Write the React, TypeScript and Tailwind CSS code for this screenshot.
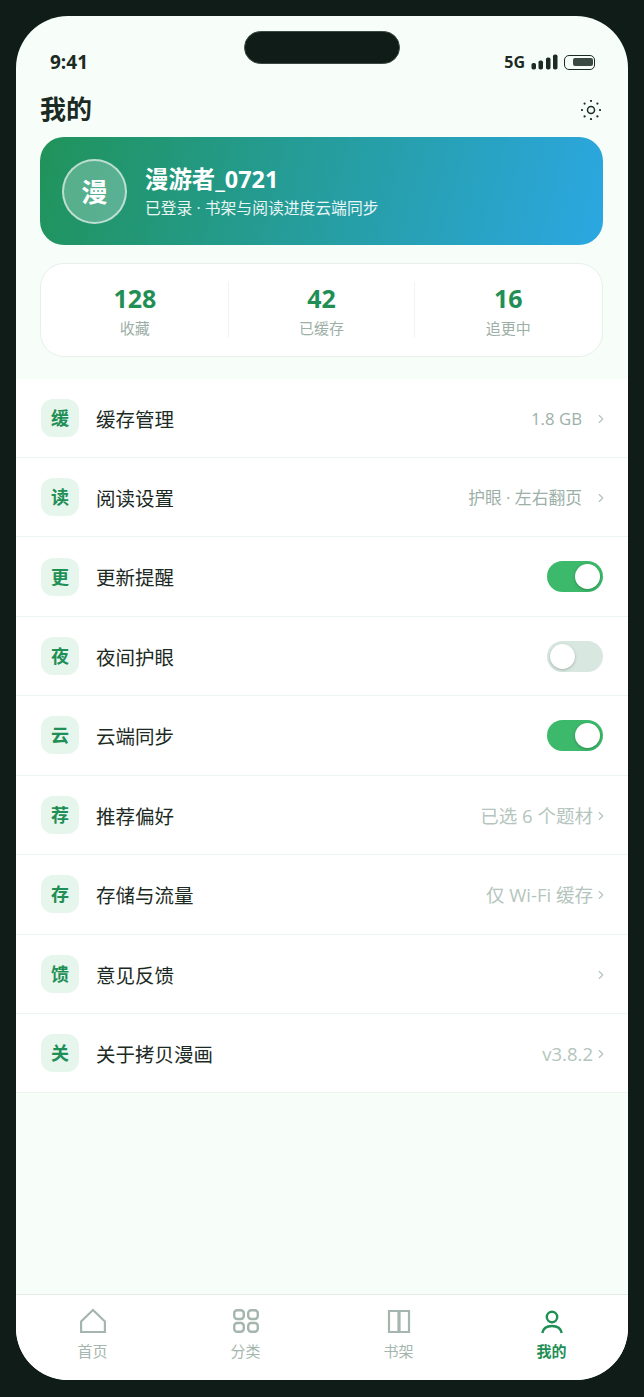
import { ChevronRight } from 'lucide-react';

const FONT = { fontFamily: '"Open Sans", "Noto Sans CJK SC", sans-serif' };

type Row = {
  badge: string;
  label: string;
  value?: string;
  wide?: boolean;
  toggle?: boolean;
};

const ROWS: Row[] = [
  { badge: '缓', label: '缓存管理', value: '1.8 GB', wide: true },
  { badge: '读', label: '阅读设置', value: '护眼 · 左右翻页', wide: true },
  { badge: '更', label: '更新提醒', toggle: true },
  { badge: '夜', label: '夜间护眼', toggle: false },
  { badge: '云', label: '云端同步', toggle: true },
  { badge: '荐', label: '推荐偏好', value: '已选 6 个题材' },
  { badge: '存', label: '存储与流量', value: '仅 Wi-Fi 缓存' },
  { badge: '馈', label: '意见反馈' },
  { badge: '关', label: '关于拷贝漫画', value: 'v3.8.2' },
];

function Toggle({ on }: { on: boolean }) {
  return (
    <div className={`flex h-[31px] w-[56px] items-center rounded-full px-[3px] ${on ? 'justify-end bg-[#3cb96b]' : 'justify-start bg-[#d8e8e0]'}`}>
      <div className="h-[25px] w-[25px] rounded-full bg-white shadow-[0_1px_3px_rgba(0,0,0,0.25)]"></div>
    </div>
  );
}

function SettingRow({ row }: { row: Row }) {
  return (
    <div className="flex h-[79.45px] items-center border-b border-[#edf5f1] pr-[25px] pl-[25px]">
      <div className="flex h-[38px] w-[38px] items-center justify-center rounded-[12px] bg-[#e6f6ed] pt-[1px] text-[18px] font-bold text-[#1f8f55]">
        {row.badge}
      </div>
      <span className="ml-[17px] pt-[3px] text-[19.5px] text-[#1c2a24]">{row.label}</span>
      <div className="ml-auto flex items-center">
        {row.value && (
          <span className={`pt-[1px] ${row.wide ? 'text-[16.8px] text-[#9db0a7]' : 'text-[18.5px] text-[#b4c5bd]'}`}>{row.value}</span>
        )}
        {row.toggle === undefined ? (
          <ChevronRight className={`mt-[2px] -mr-[5px] text-[#b4c5bd] ${row.wide ? 'ml-[12px]' : 'ml-[1px]'}`} size={14} strokeWidth={2} />
        ) : (
          <Toggle on={row.toggle} />
        )}
      </div>
    </div>
  );
}

function Stat({ value, label }: { value: string; label: string }) {
  return (
    <div className="flex flex-1 flex-col items-center border-r border-[#eef5f1] last:border-r-0">
      <span className="text-[25px] leading-[32px] font-bold text-[#1f8f55]">{value}</span>
      <span className="mt-[3px] text-[15px] leading-[22px] text-[#9db0a7]">{label}</span>
    </div>
  );
}

export default function App() {
  return (
    <div style={FONT} className="h-[1397px] w-[644px] bg-[#0f1c17] p-4">
      <div className="flex h-[1364px] w-[612px] flex-col overflow-hidden rounded-[52px] bg-[#f7fdf9]">
        {/* status bar */}
        <div className="relative flex h-[74px] shrink-0 items-start justify-between pt-[34px] pr-[33px] pl-[34px]">
          <div className="absolute top-[15px] left-[228px] h-[33px] w-[156px] rounded-[17px] border border-[#3a4a43] bg-[#0f1c17]"></div>
          <span className="text-[19px] leading-[24px] font-bold text-[#1c2a24]">9:41</span>
          <div className="flex items-center gap-[6px]">
            <span className="text-[16px] leading-[24px] font-bold text-[#1c2a24]">5G</span>
            <svg width="27" height="16" viewBox="0 0 27 16" className="fill-[#1c2a24]">
              <rect x="0.500" y="9" width="4.500" height="6.500" rx="1.800" />
              <rect x="7.500" y="6.500" width="4.500" height="9" rx="1.800" />
              <rect x="15" y="3.500" width="4.500" height="12" rx="1.800" />
              <rect x="22" y="0.500" width="4.500" height="15" rx="1.800" />
            </svg>
            <div className="flex h-[15px] w-[31px] items-center justify-end rounded-[5px] border-[1.5px] border-[#1c2a24] pr-[1.5px]">
              <div className="h-[8px] w-[20px] rounded-[2px] bg-[#3c4a44]"></div>
            </div>
          </div>
        </div>

        {/* page title */}
        <div className="flex h-[47px] shrink-0 items-center justify-between pr-[27px] pb-2 pl-6">
          <span className="text-[26px] font-bold text-[#1c2a24]">我的</span>
          <svg width="20" height="20" viewBox="0 0 20 20" fill="none" stroke="#1c2a24" strokeWidth="1.500">
            <circle cx="10" cy="10" r="3.500" />
            <g fill="#1c2a24" stroke="none">
              <circle cx="10" cy="1" r="1.100" />
              <circle cx="10" cy="19" r="1.100" />
              <circle cx="1" cy="10" r="1.100" />
              <circle cx="19" cy="10" r="1.100" />
              <circle cx="3.600" cy="3.600" r="1.100" />
              <circle cx="16.400" cy="3.600" r="1.100" />
              <circle cx="3.600" cy="16.400" r="1.100" />
              <circle cx="16.400" cy="16.400" r="1.100" />
            </g>
          </svg>
        </div>

        {/* profile */}
        <div className="pr-[25px] pl-6">
          <div className="flex h-[108px] items-center rounded-[24px] bg-[linear-gradient(105deg,#20935a,#2ba7e2)] pl-[22px]">
            <div className="flex h-[65px] w-[65px] items-center justify-center rounded-full border-2 border-white/60 bg-white/25 pt-[3px] text-[26px] font-bold text-white">
              漫
            </div>
            <div className="ml-[18px] pt-[1px]">
              <div className="text-[23.4px] leading-[30px] font-bold text-white">漫游者_0721</div>
              <div className="mt-[2px] text-[15.8px] leading-[24px] text-white/90">已登录 · 书架与阅读进度云端同步</div>
            </div>
          </div>
          <div className="mt-[18px] flex h-[94px] items-center rounded-[24px] border border-[#e6f1ec] bg-white px-[1px]">
            <div className="flex h-[56px] w-full">
              <Stat value="128" label="收藏" />
              <Stat value="42" label="已缓存" />
              <Stat value="16" label="追更中" />
            </div>
          </div>
        </div>

        {/* settings list */}
        <div className="mt-[21.5px] bg-white">
          {ROWS.map((row) => (
            <SettingRow key={row.badge} row={row} />
          ))}
        </div>

        <div className="flex-1"></div>

        {/* tab bar */}
        <div className="grid h-[86px] shrink-0 grid-cols-4 border-t border-[#e3ece8] bg-white">
          <div className="flex flex-col items-center pt-[12px] text-[#a4b6ad]">
            <svg width="28" height="28" viewBox="0 0 28 28" fill="none" stroke="currentColor" strokeWidth="2.200">
              <path d="M2.100 25V14.500L14 3 25.900 14.500V25z" />
            </svg>
            <span className="mt-[5px] text-[15px] leading-[22px]">首页</span>
          </div>
          <div className="flex flex-col items-center pt-[12px] text-[#a4b6ad]">
            <svg width="28" height="28" viewBox="0 0 28 28" fill="none" stroke="currentColor" strokeWidth="2.400">
              <rect x="2.200" y="3.200" width="9.600" height="8.800" rx="3" />
              <rect x="16.200" y="3.200" width="9.600" height="8.800" rx="3" />
              <rect x="2.200" y="16" width="9.600" height="8.800" rx="3" />
              <rect x="16.200" y="16" width="9.600" height="8.800" rx="3" />
            </svg>
            <span className="mt-[5px] text-[15px] leading-[22px]">分类</span>
          </div>
          <div className="flex flex-col items-center pt-[12px] text-[#a4b6ad]">
            <svg width="28" height="28" viewBox="0 0 28 28" fill="none" stroke="currentColor" strokeWidth="2.200">
              <path d="M4 4h9.500v21H4zM14.500 4H24v21h-9.500z" />
            </svg>
            <span className="mt-[5px] text-[15px] leading-[22px]">书架</span>
          </div>
          <div className="flex flex-col items-center pt-[12px] text-[#1f8f55]">
            <svg width="28" height="28" viewBox="0 0 28 28" fill="none" stroke="currentColor" strokeWidth="2.400">
              <circle cx="14" cy="10" r="5.200" />
              <path d="M4.300 26c.8-4.500 4.500-7 9.700-7s8.900 2.500 9.700 7" />
            </svg>
            <span className="mt-[5px] text-[15px] leading-[22px] font-bold">我的</span>
          </div>
        </div>
      </div>
    </div>
  );
}
